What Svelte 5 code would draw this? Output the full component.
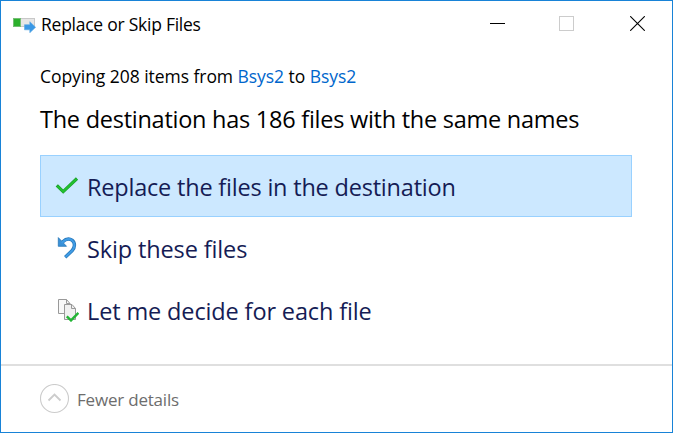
<script>
  const choices = [
    { id: 'replace', label: 'Replace the files in the destination' },
    { id: 'skip', label: 'Skip these files' },
    { id: 'decide', label: 'Let me decide for each file' }
  ];
  let selected = $state('replace');
</script>

<div class="window">
  <header>
    <svg class="app-icon" width="24" height="19" viewBox="0 0 24 19">
      <rect x=".5" y="4.5" width="21" height="8" fill="#e6e6e6" stroke="#c8c8c8" />
      <rect x=".5" y="4.5" width="7" height="8" fill="#2bb02b" stroke="#74bd74" />
      <path d="M11.5 10.7h5.3V7.7L22.6 13.3 16.8 18.8V15.8h-5.3z" fill="#3a98e5" stroke="#5ba8e4" stroke-width=".6" />
    </svg>
    <span class="title">Replace or Skip Files</span>
    <div class="controls">
      <svg width="15" height="15" viewBox="0 0 15 15"><path d="M0 7.5h15" stroke="#000" /></svg>
      <svg width="15" height="15" viewBox="0 0 15 15"><rect x=".5" y=".5" width="14" height="14" fill="none" stroke="#ccc" /></svg>
      <svg class="close" width="15" height="15" viewBox="0 0 15 15"><path d="M.2.2l14.6 14.6M14.8.2L.2 14.8" stroke="#000" stroke-width="1.1" /></svg>
    </div>
  </header>
  <main>
    <p class="info">Copying 208 items from <span class="link">Bsys2</span> to <span class="link">Bsys2</span></p>
    <h1>The destination has 186 files with the same names</h1>
    <div class="choices">
      {#each choices as choice}
        <button class={choice.id} class:selected={selected === choice.id} onclick={() => (selected = choice.id)}>
          <svg width="24" height="24" viewBox="0 0 24 24">
            {#if choice.id === 'replace'}
              <path d="M1.8 11.4l6.4 6.2L22 4.5" fill="none" stroke="#189c2c" stroke-width="3.2" />
              <path d="M2.3 11.9l5.9 5.6L21.6 4.9" fill="none" stroke="#22c02f" stroke-width="2" />
            {:else if choice.id === 'skip'}
              <path d="M7.5 6C10.5 3.2 14.2 2.2 17 4.2C20.3 6.8 20.2 11.2 17 14.8L10.2 21.2" fill="none" stroke="#2676b8" stroke-width="3.4" />
              <path d="M3.3 1.6v8.7h8.2z" fill="#3a91d8" stroke="#2676b8" stroke-width=".8" />
              <path d="M6.8 6.9C10.5 3.2 14.2 2.2 17 4.2C20.3 6.8 20.2 11.2 17 14.8L10.5 20.9" fill="none" stroke="#409ce5" stroke-width="2" />
            {:else}
              <path d="M3.5 1.5h8l3.5 4v10H3.5z" fill="#f8f8f8" stroke="#999" />
              <path d="M11.5 1.5v4H15" fill="none" stroke="#999" />
              <path d="M9.5 6.5h7.5l3.5 4v11h-11z" fill="#f0f0f0" stroke="#999" />
              <path d="M16.5 6.5v4h4" fill="none" stroke="#999" />
              <path d="M11.8 18.4l4.2 4 7.4-7.6" fill="none" stroke="#22b534" stroke-width="2.4" />
            {/if}
          </svg>
          <span class="label">{choice.label}</span>
        </button>
      {/each}
    </div>
  </main>
  <footer>
    <svg width="30" height="30" viewBox="0 0 30 30">
      <circle cx="14.5" cy="14.5" r="14" fill="none" stroke="#ccc" stroke-width="1.1" />
      <path d="M8.5 16.5l6-6 6 6" fill="none" stroke="#ccc" stroke-width="1.8" />
    </svg>
    <span>Fewer details</span>
  </footer>
</div>

<style>
  .window {
    box-sizing: border-box;
    width: 673px;
    height: 433px;
    border: 1px solid #1883d7;
    background: #fff;
    display: flex;
    flex-direction: column;
    font-family: "Open Sans", "Noto Sans", sans-serif;
    color: #000;
    white-space: nowrap;
  }
  svg { display: block; flex: none; }
  header {
    height: 45px;
    display: flex;
    align-items: center;
    padding: 0 27px 0 12px;
    box-sizing: border-box;
  }
  .title { font-size: 17.5px; margin-left: 4px; letter-spacing: -0.25px; }
  .controls { margin-left: auto; display: flex; gap: 54px; }
  .close { margin-left: 2px; }
  main { height: 317px; padding: 0 40px 0 39px; }
  .info { margin: 17px 0 0; font-size: 17.5px; line-height: 26px; letter-spacing: -0.05px; }
  .link { color: #0066cc; }
  h1 { margin: 13px 0 0; font-weight: 400; font-size: 23.5px; line-height: 34px; letter-spacing: -0.255px; }
  .choices { margin-top: 19px; display: flex; flex-direction: column; }
  button {
    height: 62px;
    display: flex;
    align-items: center;
    gap: 8px;
    padding: 0 0 0 14px;
    box-sizing: border-box;
    border: 1px solid transparent;
    background: none;
    color: #151c55;
    font: 400 23.5px "Open Sans", "Noto Sans", sans-serif;
    letter-spacing: -0.2px;
  }
  button.selected { background: #cce8ff; border-color: #99d1ff; }
  button.decide, button.skip { letter-spacing: -0.13px; }
  .label { padding-top: 1px; }
  footer {
    margin-top: auto;
    height: 68px;
    box-sizing: border-box;
    border-top: 2px solid #dfdfdf;
    padding-left: 39px;
    display: flex;
    align-items: center;
    gap: 7px;
    font-size: 17px;
    letter-spacing: -0.2px;
    color: #6d6d6d;
  }
</style>
